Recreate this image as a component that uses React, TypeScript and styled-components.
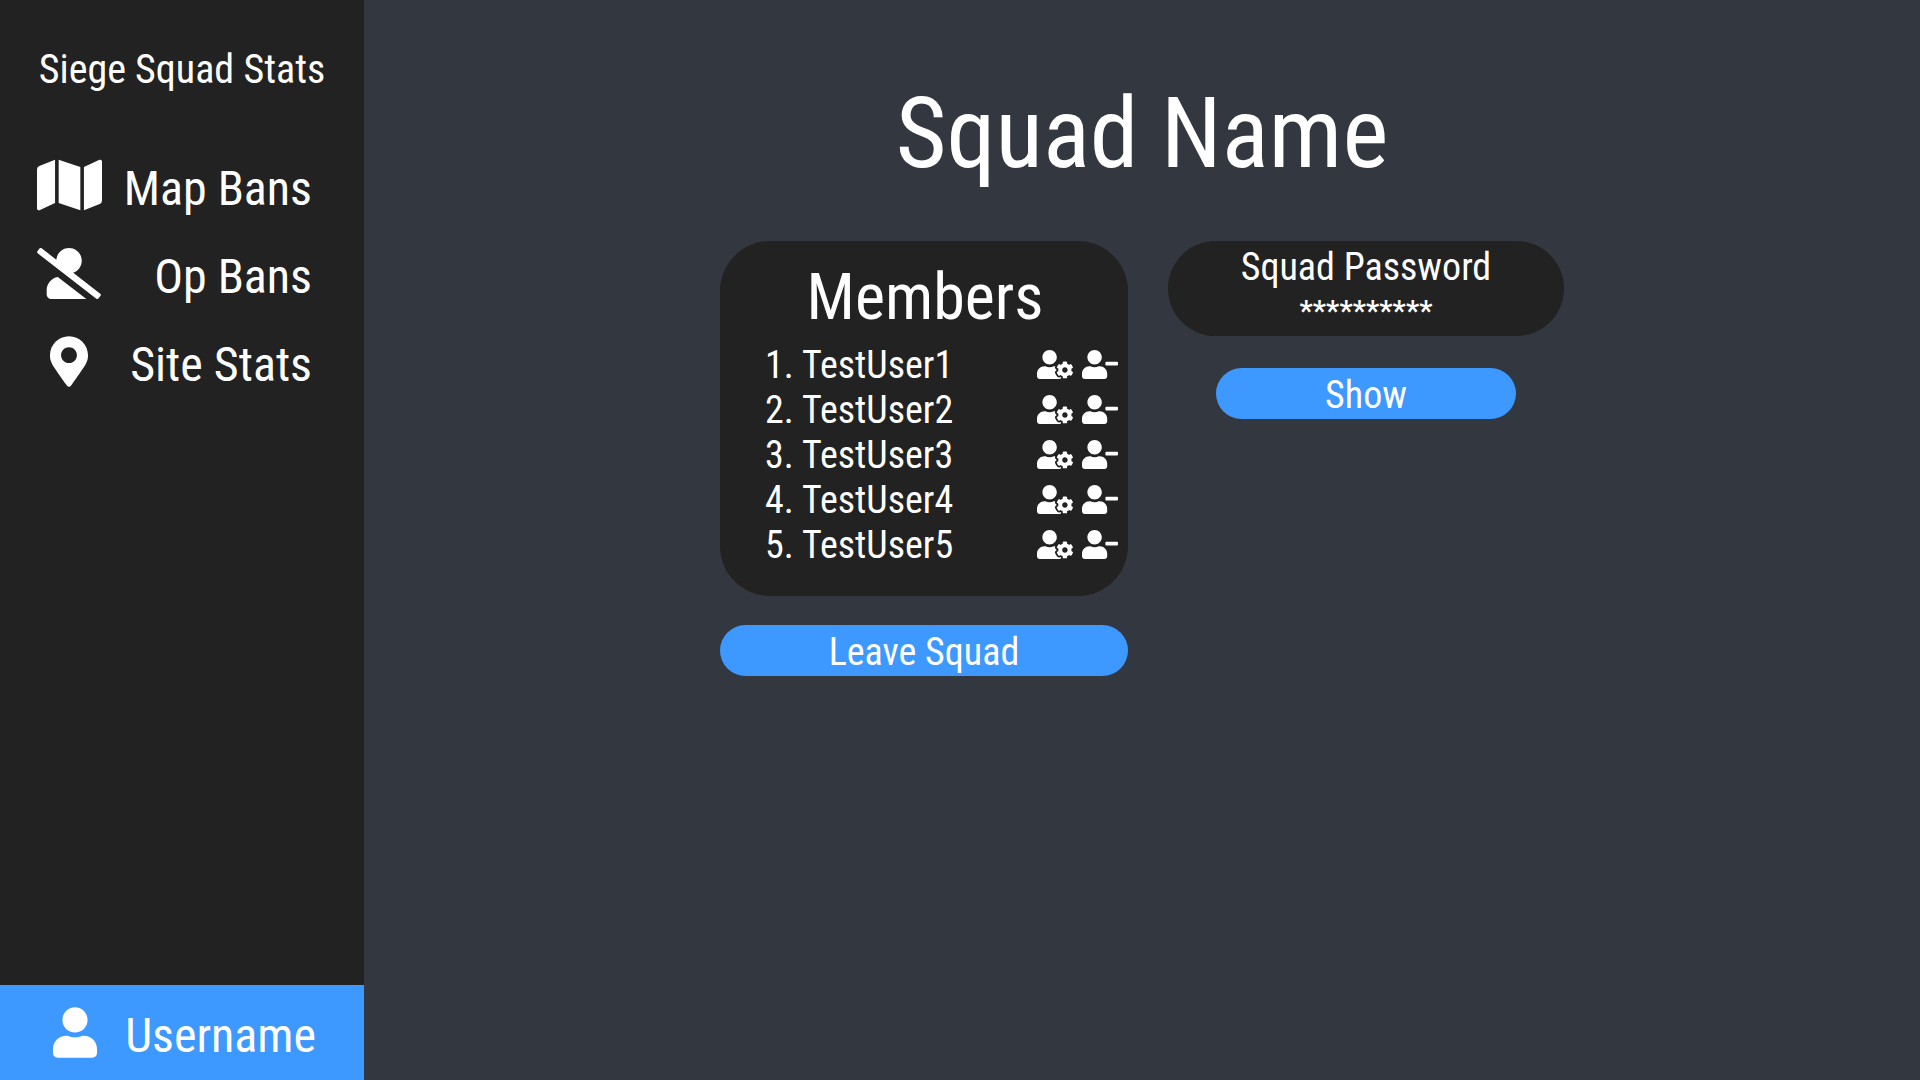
import React, { useState } from "react";
import styled, { createGlobalStyle } from "styled-components";
import { FaMap, FaMapMarkerAlt, FaUser, FaUserCog, FaUserMinus } from "react-icons/fa";

const GlobalStyle = createGlobalStyle`
  *, *::before, *::after { box-sizing: border-box; }
  body {
    margin: 0;
    background: #333740;
    color: #fff;
    font-family: "Roboto Condensed", Roboto, "Liberation Sans", sans-serif;
  }
  h1, h2, p, ol, ul { margin: 0; padding: 0; font-weight: 400; }
  ol, ul { list-style: none; }
  button { font: inherit; color: inherit; border: 0; padding: 0; background: none; cursor: pointer; }
`;

const Page = styled.div`
  display: flex;
  min-height: 100vh;
`;

const Sidebar = styled.aside`
  display: flex;
  flex-direction: column;
  flex: 0 0 364px;
  background: #222;
`;

const Brand = styled.a`
  padding-top: 40px;
  color: inherit;
  font-size: 40px;
  line-height: 60px;
  text-align: center;
  text-decoration: none;
`;

const Nav = styled.nav`
  flex: 1;
  padding-top: 44px;
`;

const NavLink = styled.a`
  display: flex;
  align-items: center;
  justify-content: space-between;
  height: 88px;
  padding: 0 52px 0 32px;
  color: inherit;
  font-size: 48px;
  text-decoration: none;
`;

const NavIcon = styled.span<{ $width: number; $height?: number }>`
  display: flex;
  justify-content: center;
  width: 74px;
  padding-bottom: 6px;

  svg {
    width: ${(p) => p.$width}px;
    height: ${(p) => p.$height ?? 51}px;
  }
`;

const UserLink = styled(NavLink)`
  height: 95px;
  padding: 6px 48px 0 38px;
  background: #3d98ff;
`;

const Main = styled.main`
  flex: 1;
  display: flex;
  flex-direction: column;
  align-items: center;
`;

const Title = styled.h1`
  padding: 74px 0 47px;
  font-size: 98px;
  line-height: 120px;
`;

const Columns = styled.div`
  display: flex;
  align-items: flex-start;
  gap: 40px;
  font-size: 38px;
`;

const MembersColumn = styled.section`
  display: flex;
  flex-direction: column;
  gap: 29px;
  width: 408px;
`;

const PasswordColumn = styled.section`
  display: flex;
  flex-direction: column;
  align-items: center;
  gap: 32px;
  width: 396px;
`;

const MembersCard = styled.div`
  padding: 16px 10px 29px 45px;
  border-radius: 50px;
  background: #222;
`;

const MembersHeading = styled.h2`
  padding: 0 33px 3px 0;
  font-size: 64px;
  line-height: 82px;
  text-align: center;
`;

const MemberRow = styled.li`
  display: flex;
  align-items: center;
  height: 45px;
`;

const MemberIndex = styled.span`
  width: 37px;
`;

const MemberActions = styled.div`
  display: flex;
  gap: 9px;
  margin-left: auto;
`;

const IconButton = styled.button`
  display: flex;

  svg {
    width: 36px;
    height: 29px;
  }
`;

const PasswordCard = styled.div`
  width: 100%;
  height: 95px;
  padding-top: 4px;
  border-radius: 48px;
  background: #222;
  line-height: 44px;
  text-align: center;
`;

const Secret = styled.p`
  font-size: 30px;
  font-weight: 500;
`;

const PillButton = styled.button<{ $width: string }>`
  width: ${(p) => p.$width};
  height: 51px;
  padding-top: 3px;
  border-radius: 26px;
  background: #3d98ff;
  line-height: 48px;
  text-align: center;
`;

const UserSlashIcon = () => (
  <svg viewBox="0 0 640 512" fill="currentColor" aria-hidden="true">
    <path d="M633.8 458.1L362.3 248.3C412.1 230.7 448 183.8 448 128 448 57.3 390.7 0 320 0c-67.1 0-121.2 51.8-126.9 117.4L45.5 3.4C38.5-2 28.5-.8 23 6.2L3.4 31.4c-5.4 7-4.2 17 2.8 22.4l588.4 454.7c7 5.4 17 4.2 22.5-2.8l19.6-25.3c5.4-6.8 4.1-16.9-2.9-22.3zM96 422.4V464c0 26.5 21.5 48 48 48h350.2L207.4 290.3C144.2 301.3 96 356 96 422.4z" />
  </svg>
);

const navItems = [
  { label: "Map Bans", icon: <FaMap />, width: 65, height: 58 },
  { label: "Op Bans", icon: <UserSlashIcon />, width: 64 },
  { label: "Site Stats", icon: <FaMapMarkerAlt />, width: 38 },
];

const members = ["TestUser1", "TestUser2", "TestUser3", "TestUser4", "TestUser5"];

export default function App() {
  const [shown, setShown] = useState(false);
  return (
    <Page>
      <GlobalStyle />
      <Sidebar>
        <Brand href="#home">Siege Squad Stats</Brand>
        <Nav>
          {navItems.map((item) => (
            <NavLink key={item.label} href="#">
              <NavIcon $width={item.width} $height={item.height}>{item.icon}</NavIcon>
              {item.label}
            </NavLink>
          ))}
        </Nav>
        <UserLink href="#user">
          <NavIcon $width={44}><FaUser /></NavIcon>
          Username
        </UserLink>
      </Sidebar>
      <Main>
        <Title>Squad Name</Title>
        <Columns>
          <MembersColumn>
            <MembersCard>
              <MembersHeading>Members</MembersHeading>
              <ol>
                {members.map((name, i) => (
                  <MemberRow key={name}>
                    <MemberIndex>{i + 1}.</MemberIndex>
                    {name}
                    <MemberActions>
                      <IconButton type="button" aria-label={`Manage ${name}`}><FaUserCog /></IconButton>
                      <IconButton type="button" aria-label={`Remove ${name}`}><FaUserMinus /></IconButton>
                    </MemberActions>
                  </MemberRow>
                ))}
              </ol>
            </MembersCard>
            <PillButton type="button" $width="100%">Leave Squad</PillButton>
          </MembersColumn>
          <PasswordColumn>
            <PasswordCard>
              <p>Squad Password</p>
              <Secret>{shown ? "squadsecret" : "**********"}</Secret>
            </PasswordCard>
            <PillButton type="button" $width="300px" onClick={() => setShown(!shown)}>
              Show
            </PillButton>
          </PasswordColumn>
        </Columns>
      </Main>
    </Page>
  );
}
